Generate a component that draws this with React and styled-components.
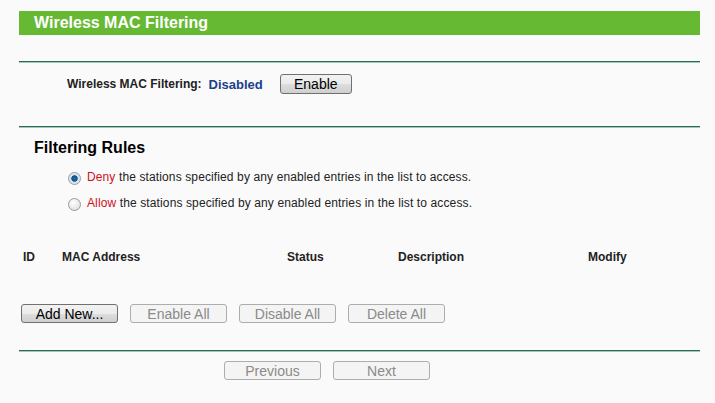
import React, { useState } from "react";
import styled, { createGlobalStyle } from "styled-components";

const GlobalStyle = createGlobalStyle`
  html, body {
    margin: 0;
    padding: 0;
    background: #fafafa;
  }
  body {
    font-family: "Liberation Sans", Arial, sans-serif;
    font-size: 12px;
    color: #000;
  }
`;

const columns = [
  { label: "ID", width: "39px" },
  { label: "MAC Address", width: "225px" },
  { label: "Status", width: "111px" },
  { label: "Description", width: "190px" },
  { label: "Modify", width: "1fr" },
];

const rules = [
  { key: "deny", word: "Deny" },
  { key: "allow", word: "Allow" },
];

const App = () => {
  const [rule, setRule] = useState("deny");

  return (
    <Page>
      <GlobalStyle />
      <TitleBar>Wireless MAC Filtering</TitleBar>
      <Divider $top={26} />

      <StatusRow>
        <StatusLabel>Wireless MAC Filtering:</StatusLabel>
        <StatusValue>Disabled</StatusValue>
        <Button $w={72} $h={20}>Enable</Button>
      </StatusRow>
      <Divider $top={32} />

      <SectionTitle>Filtering Rules</SectionTitle>
      <RuleList>
        {rules.map((r) => (
          <RuleRow key={r.key} onClick={() => setRule(r.key)}>
            <Radio $checked={rule === r.key} />
            <span>
              <RuleWord>{r.word}</RuleWord> the stations specified by any
              enabled entries in the list to access.
            </span>
          </RuleRow>
        ))}
      </RuleList>

      <TableHead>
        {columns.map((c) => (
          <HeadCell key={c.label}>{c.label}</HeadCell>
        ))}
      </TableHead>

      <ButtonRow>
        <Button>Add New...</Button>
        <Button disabled>Enable All</Button>
        <Button disabled>Disable All</Button>
        <Button disabled>Delete All</Button>
      </ButtonRow>
      <Divider $top={27} />

      <NavRow>
        <Button disabled>Previous</Button>
        <Button disabled>Next</Button>
      </NavRow>
    </Page>
  );
};

export default App;

const Page = styled.div`
  width: 681px;
  margin-left: 19px;
  padding-top: 11px;
  padding-bottom: 20px;
`;

const TitleBar = styled.div`
  height: 24px;
  line-height: 24px;
  background: #66b933;
  color: #fff;
  font-size: 16px;
  font-weight: bold;
  padding-left: 15px;
`;

const Divider = styled.div`
  margin-top: ${(p) => p.$top}px;
  height: 1px;
  background: #2e6b56;
  border-bottom: 1px solid #9fc9b8;
`;

const StatusRow = styled.div`
  display: flex;
  align-items: center;
  height: 20px;
  margin-top: 11px;
  padding-left: 48px;
`;

const StatusLabel = styled.span`
  font-weight: bold;
  color: #222;
`;

const StatusValue = styled.span`
  font-weight: bold;
  font-size: 13px;
  color: #1c3f8c;
  margin-left: 7px;
  margin-right: 17px;
`;

const SectionTitle = styled.div`
  margin-top: 11px;
  height: 18px;
  line-height: 18px;
  padding-left: 15px;
  font-size: 16px;
  font-weight: bold;
`;

const RuleList = styled.div`
  margin-top: 7px;
  padding-left: 48px;
`;

const RuleRow = styled.div`
  display: flex;
  align-items: center;
  height: 26px;
  color: #222;
  letter-spacing: 0.12px;
  cursor: default;
`;

const Radio = styled.span`
  box-sizing: border-box;
  width: 13px;
  height: 13px;
  margin: 2px 6px 0 1px;
  border-radius: 50%;
  border: 1px solid #9a9a9a;
  background: ${(p) =>
    p.$checked
      ? "radial-gradient(circle at 50% 50%, #1f6fb0 0, #0b4f8a 2.8px, #cfe0ee 3.6px, #eef2f6 100%)"
      : "radial-gradient(circle at 40% 35%, #ffffff 0, #e3e3e3 70%, #d0d0d0 100%)"};
`;

const RuleWord = styled.span`
  color: #d0101a;
`;

const TableHead = styled.div`
  display: grid;
  grid-template-columns: ${columns.map((c) => c.width).join(" ")};
  margin-top: 32px;
  height: 18px;
  align-items: center;
  padding-left: 4px;
`;

const HeadCell = styled.div`
  font-weight: bold;
  color: #222;
`;

const ButtonRow = styled.div`
  display: flex;
  gap: 12px;
  margin-top: 38px;
  padding-left: 2px;
`;

const NavRow = styled.div`
  display: flex;
  gap: 12px;
  margin-top: 9px;
  padding-left: 205px;
`;

const Button = styled.button`
  box-sizing: border-box;
  width: ${(p) => p.$w || 97}px;
  height: ${(p) => p.$h || 19}px;
  padding: 0;
  font-family: "Liberation Sans", Arial, sans-serif;
  font-size: 14px;
  line-height: 1;
  border-radius: 3px;
  color: #000;
  border: 1px solid #707070;
  background: linear-gradient(#f2f2f2 0%, #ebebeb 50%, #dddddd 51%, #cfcfcf 100%);

  &:disabled {
    color: #8a8a8a;
    border-color: #adadad;
    background: #f4f4f4;
  }
`;
